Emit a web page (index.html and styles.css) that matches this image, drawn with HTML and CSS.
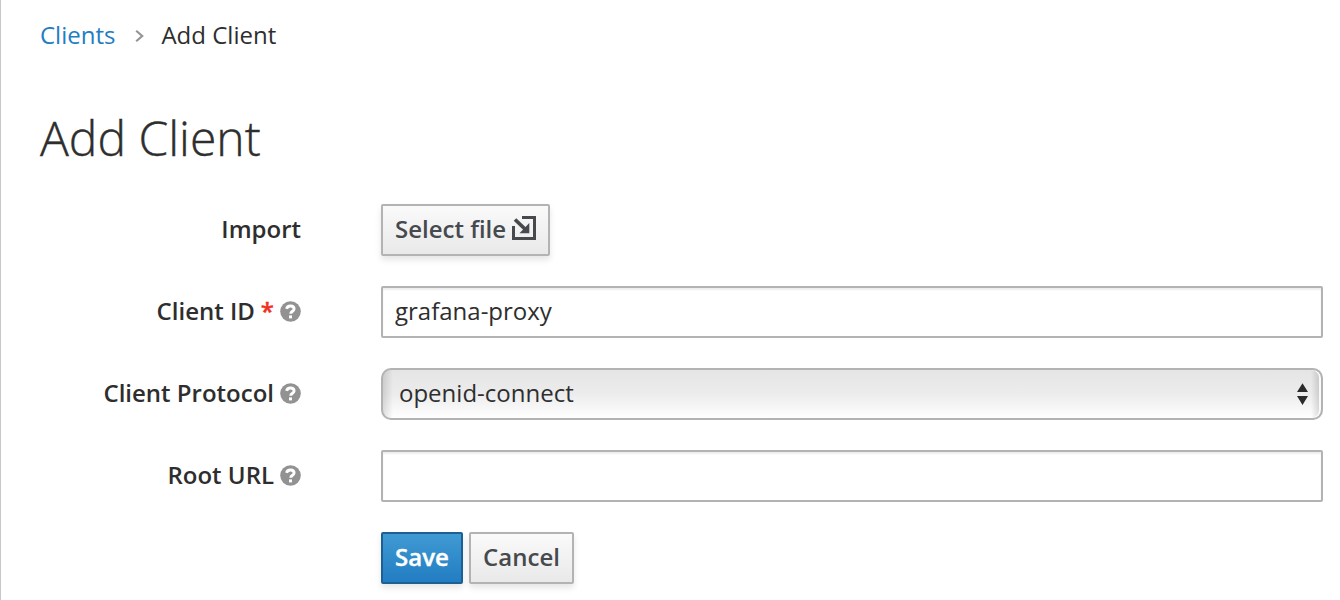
FILE: index.html
```html
<!DOCTYPE html>
<html lang="en">
<head>
<meta charset="utf-8">
<title>Add Client</title>
<link rel="stylesheet" href="styles.css">
</head>
<body>
<main class="page">
  <nav class="breadcrumb">
    <a class="crumb-link" href="#">Clients</a>
    <svg class="crumb-sep" width="9" height="14" viewBox="0 0 9 14"><path d="M1.200 1.700L7.200 7l-6 5.300" fill="none" stroke="#959595" stroke-width="2.200"/></svg>
    <span>Add Client</span>
  </nav>
  <h1 class="title">Add Client</h1>
  <form class="form">
    <div class="row">
      <div class="label"><span class="label-text">Import</span></div>
      <button type="button" class="btn select-file"><span>Select file</span><svg width="24" height="24" viewBox="0 0 24 24"><path d="M10 1.500H22.500V22.500H1.500V10" fill="none" stroke="#46494d" stroke-width="3"/><path d="M3 3.500L14 14" fill="none" stroke="#46494d" stroke-width="3.700"/><path d="M17.300 7V17.300H7.500z" fill="#46494d"/></svg></button>
    </div>
    <div class="row">
      <div class="label"><span class="label-text">Client ID</span><span class="required">*</span><svg class="help" viewBox="0 0 21 21"><circle cx="10.500" cy="10.500" r="10.300" fill="#929292"/><path d="M6.600 7.900C7.400 3.800 14.100 4.100 14.100 8C14.100 10.300 10.700 10.200 10.700 12.700" fill="none" stroke="#fff" stroke-width="2.900"/><path d="M9 14.400h3v3h-3z" fill="#fff"/></svg></div>
      <div class="control"><span class="value">grafana-proxy</span></div>
    </div>
    <div class="row">
      <div class="label"><span class="label-text">Client Protocol</span><svg class="help" viewBox="0 0 21 21"><circle cx="10.500" cy="10.500" r="10.300" fill="#929292"/><path d="M6.600 7.900C7.400 3.800 14.100 4.100 14.100 8C14.100 10.300 10.700 10.200 10.700 12.700" fill="none" stroke="#fff" stroke-width="2.900"/><path d="M9 14.400h3v3h-3z" fill="#fff"/></svg></div>
      <div class="control select"><span class="value">openid-connect</span><svg width="11" height="22" viewBox="0 0 11 22"><path d="M5.500 .3L11 9H0zM5.500 22L11 13H0z" fill="#2b2b2b"/></svg></div>
    </div>
    <div class="row">
      <div class="label"><span class="label-text">Root URL</span><svg class="help" viewBox="0 0 21 21"><circle cx="10.500" cy="10.500" r="10.300" fill="#929292"/><path d="M6.600 7.900C7.400 3.800 14.100 4.100 14.100 8C14.100 10.300 10.700 10.200 10.700 12.700" fill="none" stroke="#fff" stroke-width="2.900"/><path d="M9 14.400h3v3h-3z" fill="#fff"/></svg></div>
      <div class="control"></div>
    </div>
    <div class="actions">
      <button type="button" class="btn primary">Save</button>
      <button type="button" class="btn cancel">Cancel</button>
    </div>
  </form>
</main>
</body>
</html>
```
FILE: styles.css
```css
* { box-sizing: border-box; }
body { margin: 0; background: #fff; color: #2e2e2e; font: 24px/34px "Open Sans", sans-serif; overflow: hidden; }
.page { height: 600px; border-left: 1px solid #c8c8c8; padding: 18px 17px 0 39px; }
.breadcrumb { display: flex; align-items: center; height: 34px; }
.crumb-link { color: #227dc2; text-decoration: none; }
.crumb-sep { margin: 2px 17px 0 20px; }
.title { margin: 54px 0 0; height: 64px; font-size: 48px; line-height: 64px; font-weight: 300; -webkit-text-stroke: .4px currentColor; }
.form { display: flex; flex-direction: column; gap: 30px; margin-top: 34px; }
.row { display: grid; grid-template-columns: 261px 942px; column-gap: 80px; height: 52px; }
.label { display: flex; align-items: center; justify-content: flex-end; font-weight: 600; white-space: nowrap; }
.label-text, .required, .value { padding-bottom: 2px; }
.required { color: #f0301c; margin-left: 6px; -webkit-text-stroke: .4px currentColor; }
.help { width: 21px; height: 21px; margin: 0 0 1px 6px; flex: none; }
.control { display: flex; align-items: center; border: 2px solid #b3b3b3; border-radius: 2px; padding: 0 12px; box-shadow: inset 0 2px 2px rgba(0,0,0,.07); }
.select {
  justify-content: space-between;
  border-radius: 10px;
  padding: 0 13px 0 16px;
  background:
    linear-gradient(to left, rgba(0,0,0,.16), transparent) right / 10px 100% no-repeat,
    linear-gradient(to right, rgba(0,0,0,.12), transparent) left / 10px 100% no-repeat,
    linear-gradient(#e5e5e5, #ececec 50%, #fff);
  box-shadow: inset -2px 0 0 #fafafa;
}
.btn { display: flex; align-items: center; justify-content: center; height: 52px; padding: 0 0 2px; border: 2px solid #b3b3b3; border-radius: 2px; background: linear-gradient(#fafafa, #e9e9e9); color: #46494d; font: 600 24px/34px "Open Sans", sans-serif; box-shadow: 0 4px 6px rgba(0,0,0,.1); }
.select-file { width: 169px; justify-content: flex-start; padding-left: 12px; gap: 6px; }
.select-file svg { margin-bottom: 2px; }
.actions { display: flex; gap: 6px; margin-left: 341px; }
.primary { width: 82px; background: linear-gradient(#3f9ad3, #227dc2); border-color: #1c5f94; color: #fff; -webkit-text-stroke: .4px #fff; }
.cancel { width: 105px; }
```
